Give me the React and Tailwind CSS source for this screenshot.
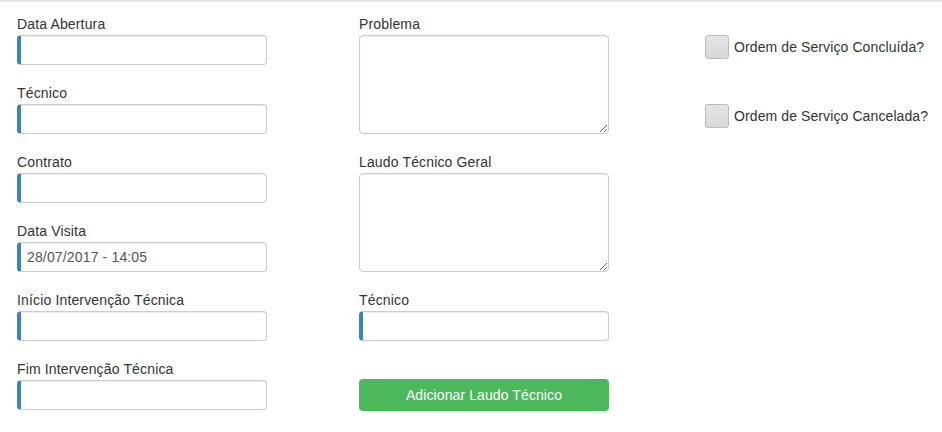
import React from 'react';

const Field = ({ label, value, className = '' }) => (
  <div className={`flex flex-col ${className}`}>
    <label className="text-[14px] leading-[15px] tracking-[0.15px] text-[#333] mt-[1px] mb-[3px]">{label}</label>
    <input
      type="text"
      defaultValue={value}
      className="h-[30px] w-full rounded-[4px] border border-[#ccc] border-l-[4px] border-l-[#3a83c3] px-[6px] text-[14px] tracking-[0.15px] text-[#555] shadow-[inset_0_1px_1px_rgba(0,0,0,0.075)] outline-none"
    />
  </div>
);

const Area = ({ label, className = '' }) => (
  <div className={`flex flex-col ${className}`}>
    <label className="text-[14px] leading-[15px] tracking-[0.15px] text-[#333] mt-[1px] mb-[3px]">{label}</label>
    <textarea className="h-[99px] w-full rounded-[4px] border border-[#ccc] px-[6px] text-[14px] shadow-[inset_0_1px_1px_rgba(0,0,0,0.075)] outline-none" />
  </div>
);

const Check = ({ label, className = '' }) => (
  <div className={`flex items-center ${className}`}>
    <span className="h-[24px] w-[24px] rounded-[3px] border border-[#bbb] bg-[linear-gradient(#e4e4e4,#d8d8d8)]" />
    <span className="ml-[5px] text-[14px] tracking-[0.1px] text-[#333]">{label}</span>
  </div>
);

export default function App() {
  return (
    <div
      className="h-[432px] w-[942px] border-t-2 border-[#e8e8e8] bg-white pt-[14px]"
      style={{ fontFamily: '"Liberation Sans", Arial, sans-serif' }}
    >
      <div className="flex">
        <div className="ml-[17px] w-[250px] flex flex-col gap-[20px]">
          <Field label="Data Abertura" />
          <Field label="Técnico" />
          <Field label="Contrato" />
          <Field label="Data Visita" value="28/07/2017 - 14:05" />
          <Field label="Início Intervenção Técnica" />
          <Field label="Fim Intervenção Técnica" />
        </div>
        <div className="ml-[92px] w-[250px] flex flex-col">
          <Area label="Problema" />
          <Area label="Laudo Técnico Geral" className="mt-[20px]" />
          <Field label="Técnico" className="mt-[20px]" />
          <button className="mt-[38px] h-[32px] w-full rounded-[4px] bg-[#4cb85c] text-[14px] tracking-[0.1px] text-white">
            Adicionar Laudo Técnico
          </button>
        </div>
        <div className="ml-[96px] flex flex-col pt-[19px]">
          <Check label="Ordem de Serviço Concluída?" />
          <Check label="Ordem de Serviço Cancelada?" className="mt-[45px]" />
        </div>
      </div>
    </div>
  );
}
